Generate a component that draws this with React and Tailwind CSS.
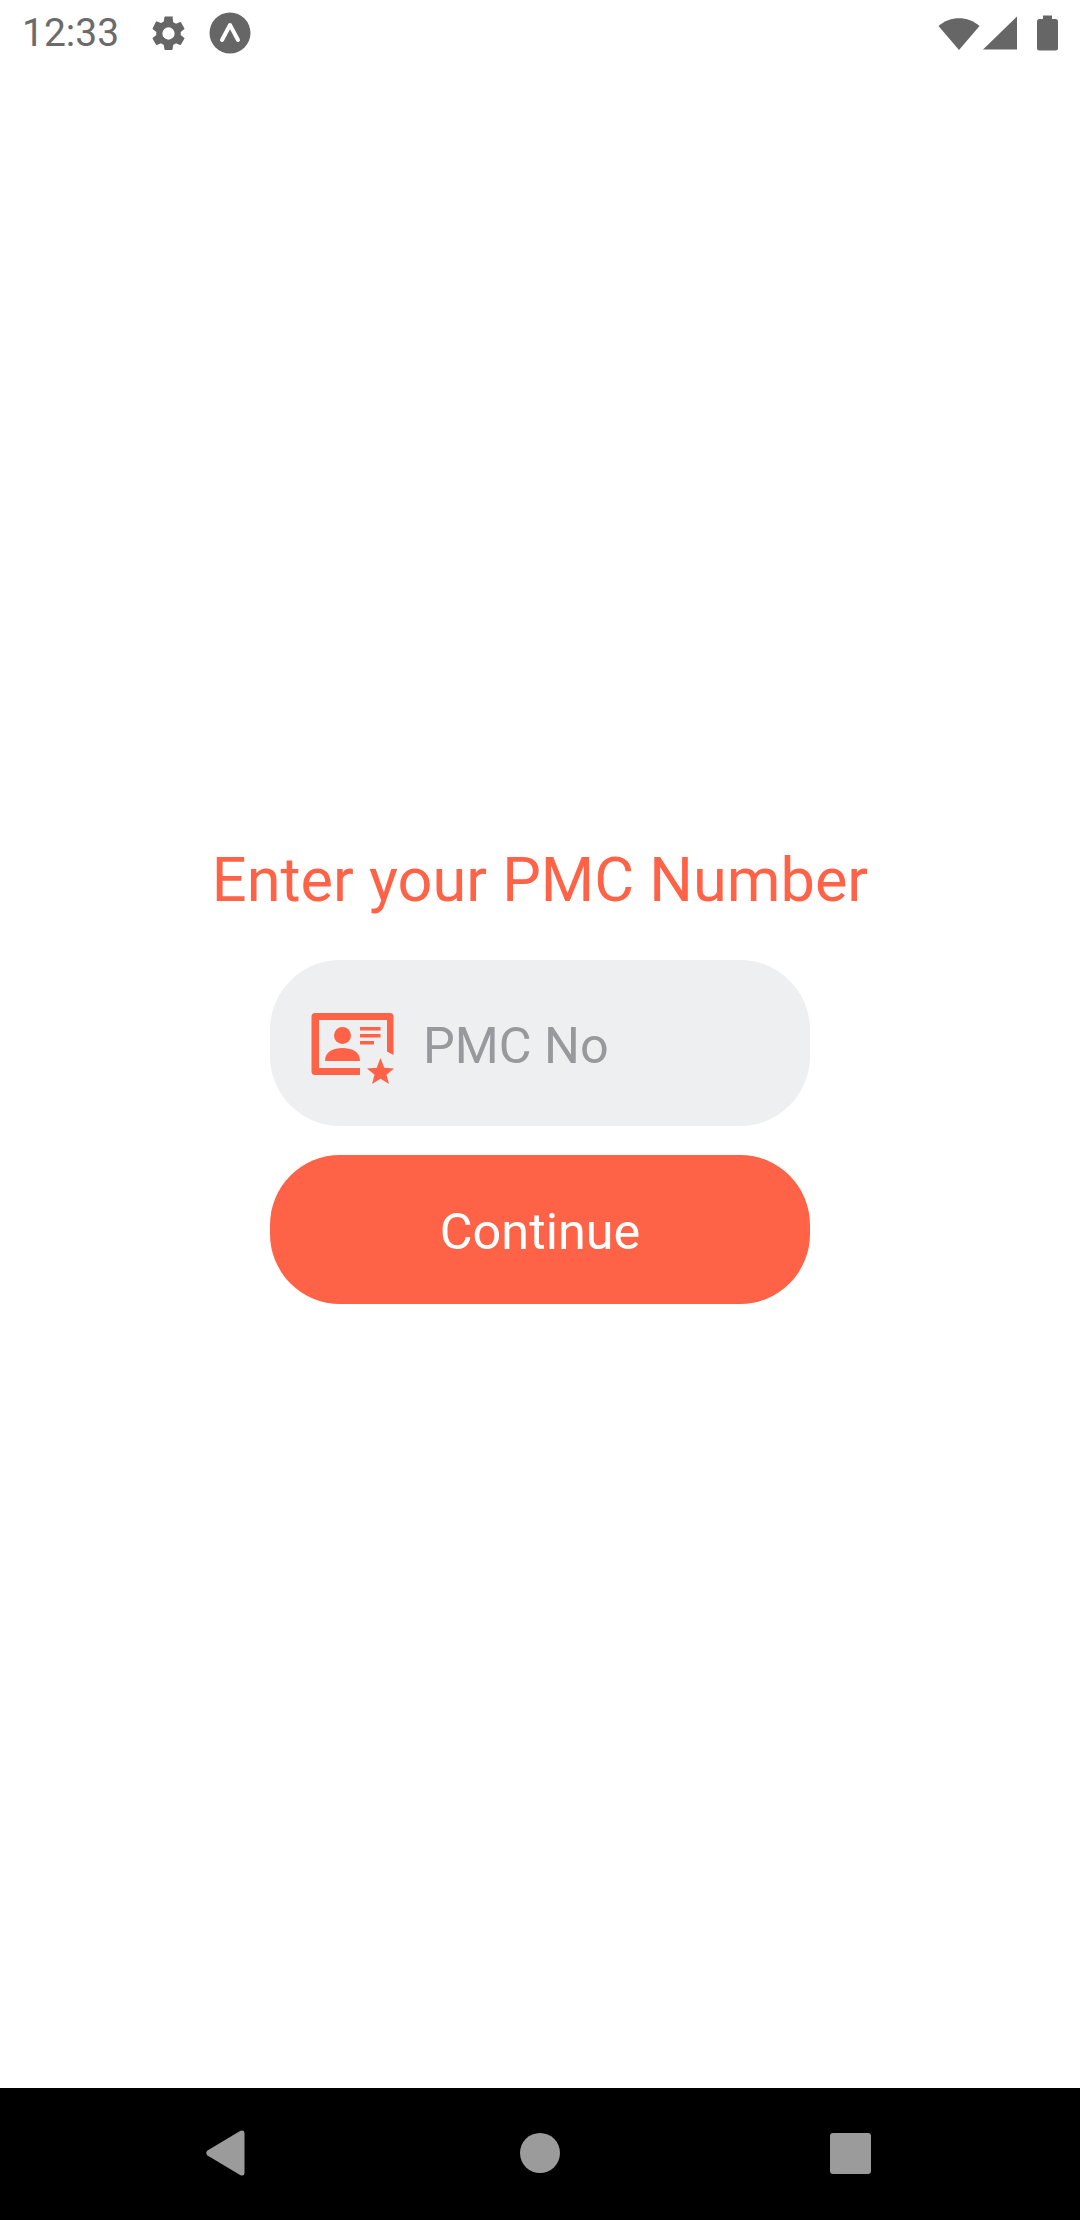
import React from "react";

const coral = "#ff6347";

const StatusBar = () => (
  <div className="h-[66px] flex items-center justify-between pl-[22px] pr-[22px] shrink-0">
    <div className="flex items-center">
      <span className="text-[39px] leading-none text-[#6b6b6b] w-[126px]">12:33</span>
      <svg width="41" height="41" viewBox="0 0 24 24" fill="#666666">
        <path d="M19.14 12.94c.04-.3.06-.61.06-.94s-.02-.64-.07-.94l2.03-1.58a.49.49 0 0 0 .12-.61l-1.92-3.32a.49.49 0 0 0-.59-.22l-2.39.96c-.5-.38-1.03-.7-1.62-.94l-.36-2.54A.48.48 0 0 0 13.92 2h-3.84a.47.47 0 0 0-.47.41l-.36 2.54c-.59.24-1.13.57-1.62.94l-2.39-.96a.48.48 0 0 0-.59.22L2.74 8.87a.47.47 0 0 0 .12.61l2.03 1.58c-.05.3-.09.63-.09.94s.02.64.07.94l-2.03 1.58a.49.49 0 0 0-.12.61l1.92 3.32c.12.22.37.29.59.22l2.39-.96c.5.38 1.03.7 1.62.94l.36 2.54c.05.24.24.41.48.41h3.84c.24 0 .44-.17.47-.41l.36-2.54c.59-.24 1.13-.56 1.62-.94l2.39.96c.22.08.47 0 .59-.22l1.92-3.32a.47.47 0 0 0-.12-.61l-2.01-1.58zM12 15.6A3.6 3.6 0 1 1 12 8.4a3.6 3.6 0 0 1 0 7.2z" />
      </svg>
      <svg width="42" height="42" viewBox="0 0 42 42" className="ml-[20px]">
        <circle cx="21" cy="21" r="20.5" fill="#666666" />
        <path d="M13 28 L21 13 L29 28" fill="none" stroke="#ffffff" strokeWidth="4" strokeLinecap="round" strokeLinejoin="round" />
      </svg>
    </div>
    <div className="flex items-center">
      <svg width="42" height="36" viewBox="0 0 42 36" fill="#666666">
        <path d="M0.5 11 C12 0.5 30 0.5 41.5 11 L21 35 Z" />
      </svg>
      <svg width="34" height="34" viewBox="0 0 34 34" fill="#666666" className="ml-[3px]">
        <path d="M0 33.5 L34 0.5 V33.5 Z" />
      </svg>
      <svg width="21" height="36" viewBox="0 0 21 36" fill="#666666" className="ml-[20px]">
        <path d="M6 0.5 H15 V4 H18.5 A2.5 2.5 0 0 1 21 6.5 V33 A2.5 2.5 0 0 1 18.5 35.5 H2.5 A2.5 2.5 0 0 1 0 33 V6.5 A2.5 2.5 0 0 1 2.5 4 H6 Z" />
      </svg>
    </div>
  </div>
);

const PmcIcon = () => (
  <svg width="84" height="72" viewBox="0 0 84 72" fill={coral} className="shrink-0 mt-[3px]">
    <path d="M4 1 H79 A3.5 3.5 0 0 1 82.500 4.500 V43 L76 39.500 V8 H8 V56 H49 V63 H4 A3.500 3.500 0 0 1 0.500 59.500 V4.500 A3.500 3.500 0 0 1 4 1 Z" />
    <circle cx="31.500" cy="23.500" r="8.500" />
    <path d="M14 49 C14 39 23 36 31.500 36 C40 36 49 39 49 49 Z" />
    <rect x="49" y="15" width="20.500" height="3.500" />
    <rect x="49" y="22" width="20.500" height="3.500" />
    <rect x="49" y="29" width="14" height="3.500" />
    <path d="M69.500 46 L73.300 55.800 L83 56.400 L75.500 62.700 L78 72 L69.500 66.800 L61 72 L63.500 62.700 L56 56.400 L65.700 55.800 Z" />
  </svg>
);

const NavBar = () => (
  <div className="h-[132px] bg-black shrink-0 flex items-center pl-[206px] pb-[2px]">
    <svg width="40" height="46" viewBox="0 0 40 46" fill="#9b9b9b">
      <path d="M1.500 20.500 L34.500 0.800 Q38.500 -0.500 38.500 3 V43 Q38.500 46.500 34.500 45.200 L1.500 25.500 Q-1 23 1.500 20.500 Z" />
    </svg>
    <div className="w-10 h-10 rounded-full bg-[#9b9b9b] ml-[274px]" />
    <div className="w-[41px] h-[41px] rounded-[3px] bg-[#9b9b9b] ml-[270px]" />
  </div>
);

export default function App() {
  return (
    <div className="w-[1080px] h-[2220px] bg-white flex flex-col font-['Roboto',sans-serif] overflow-hidden">
      <StatusBar />
      <div className="flex-1 flex flex-col items-center pt-[781px]">
        <h1 className="text-[61.25px] leading-[66px] font-normal text-[#ff6347]">Enter your PMC Number</h1>
        <div className="w-[540px] h-[166px] mt-[47px] pt-[6px] rounded-[70px] bg-[#eeeff1] flex items-center pl-[41px]">
          <PmcIcon />
          <span className="ml-[28px] text-[50.4px] leading-none text-[#97999c]">PMC No</span>
        </div>
        <button className="w-[540px] h-[149px] mt-[29px] pt-[5px] rounded-[70px] bg-[#ff6347] text-white text-[50.4px] leading-none">
          Continue
        </button>
      </div>
      <NavBar />
    </div>
  );
}
